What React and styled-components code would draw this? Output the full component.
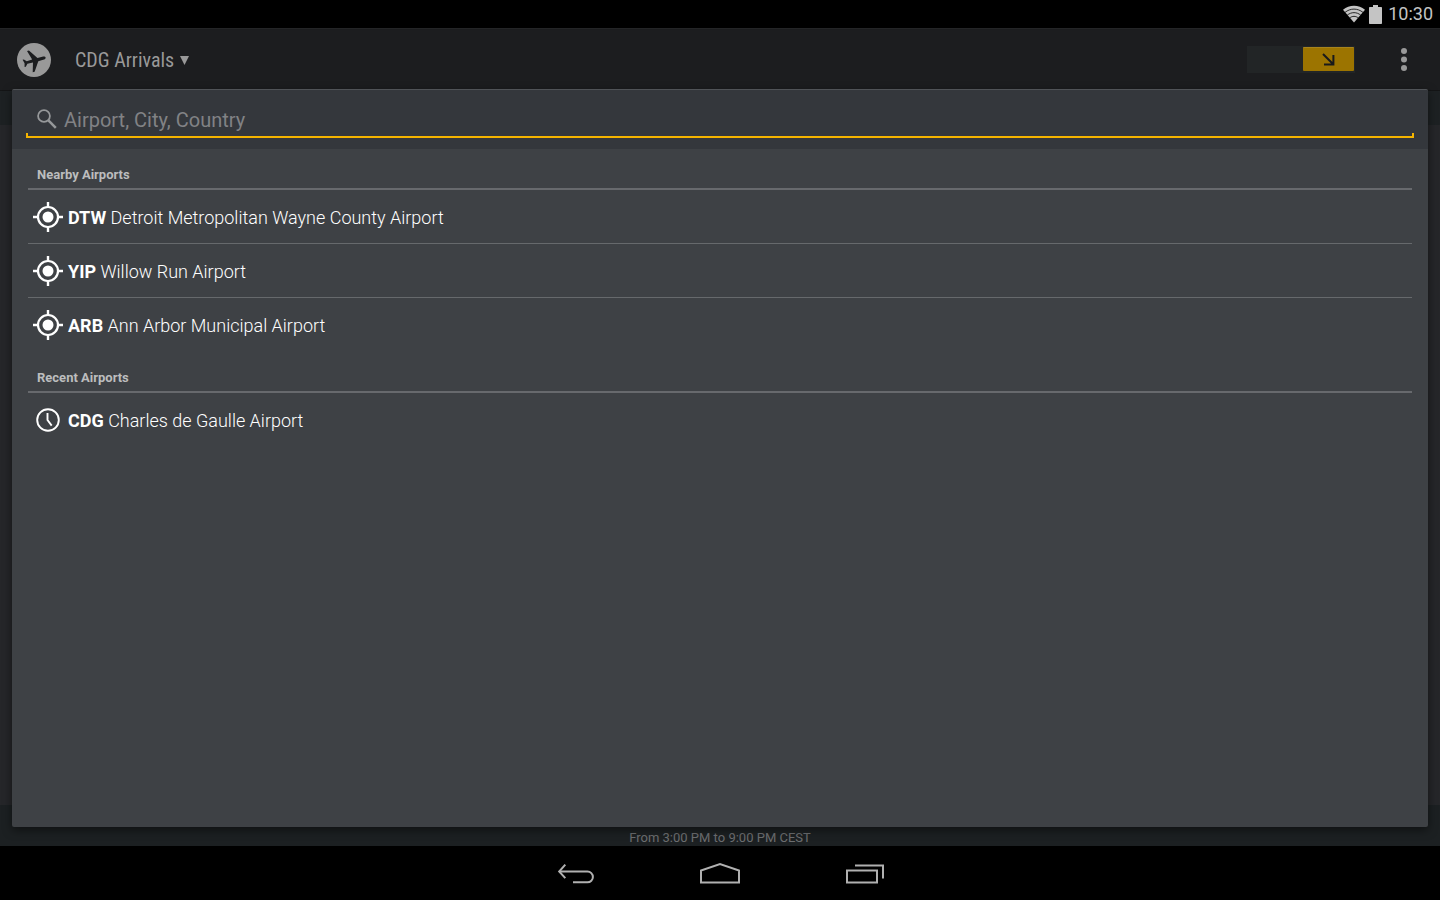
import React, { useState } from 'react';
import styled, { createGlobalStyle } from 'styled-components';

const GlobalStyle = createGlobalStyle`
  * {
    box-sizing: border-box;
  }

  body {
    margin: 0;
    background: #000;
    font-family: Roboto, 'Liberation Sans', sans-serif;
  }

  button {
    padding: 0;
    border: 0;
    background: none;
    color: inherit;
    font: inherit;
    cursor: pointer;
  }

  svg {
    display: block;
    flex: none;
  }
`;

const Screen = styled.div`
  display: flex;
  flex-direction: column;
  height: 100vh;
`;

const StatusBar = styled.div`
  display: flex;
  align-items: center;
  justify-content: flex-end;
  gap: 4px;
  height: 28px;
  padding-right: 7px;
  color: #c4c4c4;
`;

const Clock = styled.span`
  margin-left: 2px;
  font-size: 18px;
  line-height: 30px;
`;

const Main = styled.main`
  position: relative;
  flex: 1;
  display: flex;
  flex-direction: column;
  min-height: 0;
`;

const ActionBar = styled.header`
  display: flex;
  align-items: center;
  height: 63px;
  padding: 0 27px 0 17px;
  background: #1c1d1f;
  border-top: 1px solid #242527;
  border-bottom: 1px solid #141516;
`;

const BoardPicker = styled.button`
  display: flex;
  align-items: center;
  gap: 6px;
  margin: 0 auto 0 24px;
  color: #999;
  font-family: 'Roboto Condensed', Roboto, sans-serif;
  font-size: 20px;
  line-height: 28px;
`;

const DirectionSwitch = styled.button`
  display: flex;
  justify-content: ${({ $arrivals }) => ($arrivals ? 'flex-end' : 'flex-start')};
  width: 108px;
  height: 27px;
  padding: 1px;
  background: #222526;
`;

const Thumb = styled.span`
  display: flex;
  align-items: center;
  justify-content: center;
  width: 51px;
  height: 24px;
  border-top: 1px solid #a8841c;
  border-radius: 1px;
  background: #9c7400;
`;

const OverflowButton = styled.button`
  margin-left: 40px;
  padding: 4px 6px;
  color: #999;
`;

const ColumnStrip = styled.div`
  height: 34px;
  background: #1d2123;
`;

const Board = styled.div`
  flex: 1;
  background: #252629;
`;

const TimeRange = styled.footer`
  display: flex;
  align-items: flex-end;
  justify-content: center;
  height: 41px;
  background: #1c2022;
  color: #6c6e70;
  font-size: 13px;
  font-weight: 400;
  line-height: 16px;
`;

/* The search panel floats over the dimmed board */
const Panel = styled.section`
  position: absolute;
  top: 61px;
  right: 12px;
  bottom: 19px;
  left: 12px;
  overflow: hidden auto;
  border-top: 1px solid #505357;
  border-radius: 2px;
  background: #3e4145;
  box-shadow: 0 3px 10px rgba(0, 0, 0, 0.5);
`;

const SearchHeader = styled.div`
  height: 59px;
  padding: 12px 14px 0;
  background: #34373c;
`;

const SearchField = styled.label`
  position: relative;
  display: flex;
  align-items: center;
  gap: 7px;
  height: 36px;
  padding-left: 11px;
  border-bottom: 2px solid #f5b400;
  color: #96989a;

  &::before,
  &::after {
    content: '';
    position: absolute;
    bottom: 0;
    width: 2px;
    height: 3px;
    background: #f5b400;
  }

  &::before {
    left: 0;
  }

  &::after {
    right: 0;
  }
`;

const SearchInput = styled.input`
  flex: 1;
  min-width: 0;
  height: 34px;
  padding: 2px 0 0;
  border: 0;
  outline: 0;
  background: none;
  color: #fff;
  font: 400 20px Roboto, sans-serif;

  &::placeholder {
    color: #818285;
    opacity: 1;
  }
`;

const Group = styled.section`
  margin: 0 16px;
  padding-bottom: 1px;
`;

const GroupTitle = styled.h2`
  height: 41px;
  margin: 0;
  padding: 17px 9px 0;
  border-bottom: 2px solid #67696d;
  color: #bcbdbe;
  font-size: 13px;
  font-weight: 700;
  line-height: 18px;
`;

const AirportList = styled.ul`
  margin: 0;
  padding: 0;
  list-style: none;
`;

const AirportItem = styled.li`
  & + & {
    border-top: 1px solid #66696c;
  }
`;

const AirportButton = styled.button`
  display: flex;
  align-items: center;
  gap: 5px;
  width: 100%;
  height: 53px;
  padding-left: 5px;
  color: #fff;
  font-size: 18px;
  font-weight: 300;
  line-height: 24px;
  text-align: left;
`;

const AirportLabel = styled.span`
  padding-top: 2px;
`;

const Code = styled.strong`
  font-weight: 700;
`;

const NavBar = styled.nav`
  display: flex;
  align-items: center;
  justify-content: center;
  gap: 104px;
  height: 54px;
  padding-top: 2px;
  color: #b0b0b0;
`;

const WifiIcon = () => (
  <svg width="22" height="18" viewBox="0 0 22 18" aria-hidden="true">
    <path d="M0 4.8C6.2-.7 15.8-.7 22 4.8L11 17.4Z" fill="currentColor" />
    <path
      d="M2 7.4c5.4-4.4 12.6-4.4 18 0M4.2 10.2c4.1-3.4 9.5-3.4 13.6 0M6.6 13c2.7-2.2 6.1-2.2 8.8 0"
      fill="none"
      stroke="#000"
      strokeWidth="0.8"
    />
  </svg>
);

const BatteryIcon = () => (
  <svg width="13" height="19" viewBox="0 0 13 19" aria-hidden="true">
    <path d="M4 0h5v2h3.2q.8 0 .8.8v15.4q0 .8-.8.8H.8q-.8 0-.8-.8V2.8Q0 2 .8 2H4z" fill="currentColor" />
  </svg>
);

const PlaneLogo = () => (
  <svg width="34" height="34" viewBox="0 0 34 34" role="img" aria-label="Flights">
    <circle cx="17" cy="17" r="17" fill="#999" />
    <path
      transform="translate(17.5 17.5) rotate(75)"
      d="M0-11.5c1.1 0 1.6 1.4 1.6 3v5L11 2.8v2L1.6 2l-.4 5.7 2.6 2.3v1.3L0 10.3l-3.8 1V10l2.6-2.3L-1.6 2-11 4.8v-2l9.4-6.3v-5c0-1.6.5-3 1.6-3z"
      fill="#1c1d1f"
    />
  </svg>
);

const CaretIcon = () => (
  <svg width="9" height="10" viewBox="0 0 9 10" aria-hidden="true">
    <path d="M0 1h9L4.5 10z" fill="currentColor" />
  </svg>
);

const ArrowIcon = () => (
  <svg width="13" height="13" viewBox="0 0 13 13" aria-hidden="true">
    <path d="M1 1l10 10M11.4 2v9.6H2" fill="none" stroke="#191a1b" strokeWidth="2" />
  </svg>
);

const MoreIcon = () => (
  <svg width="6" height="24" viewBox="0 0 6 24" aria-hidden="true">
    <circle cx="3" cy="3" r="3" fill="currentColor" />
    <circle cx="3" cy="11.5" r="3" fill="currentColor" />
    <circle cx="3" cy="20" r="3" fill="currentColor" />
  </svg>
);

const SearchIcon = () => (
  <svg width="20" height="20" viewBox="0 0 20 20" aria-hidden="true">
    <circle cx="7" cy="7" r="5.9" fill="none" stroke="currentColor" strokeWidth="1.8" />
    <path d="M11.4 11.4l7.4 7.4" stroke="currentColor" strokeWidth="2.5" />
  </svg>
);

const NearbyIcon = () => (
  <svg width="30" height="30" viewBox="0 0 30 30" aria-hidden="true">
    <circle cx="15" cy="15" r="10" fill="none" stroke="currentColor" strokeWidth="2.2" />
    <circle cx="15" cy="15" r="5.5" fill="currentColor" />
    <path d="M15 0v5M15 25v5M0 15h5M25 15h5" stroke="currentColor" strokeWidth="2.4" />
  </svg>
);

const RecentIcon = () => (
  <svg width="30" height="30" viewBox="0 0 30 30" aria-hidden="true">
    <circle cx="15" cy="15" r="10.8" fill="none" stroke="currentColor" strokeWidth="1.9" />
    <path d="M14.5 8v7l4.2 5.6" fill="none" stroke="currentColor" strokeWidth="1.9" />
  </svg>
);

const BackIcon = () => (
  <svg width="40" height="24" viewBox="0 0 40 24" fill="none" stroke="currentColor" strokeWidth="2" aria-hidden="true">
    <path d="M4 9.5h28.5a5.4 5.4 0 0 1 0 10.8H18" />
    <path d="M10.3 2.6L4.2 9.5l6.1 6.6" />
  </svg>
);

const HomeIcon = () => (
  <svg width="42" height="24" viewBox="0 0 42 24" fill="none" stroke="currentColor" strokeWidth="2" aria-hidden="true">
    <path d="M2 20.5V8.5L21 2l19 6.5v12z" />
  </svg>
);

const RecentsIcon = () => (
  <svg width="40" height="24" viewBox="0 0 40 24" fill="none" stroke="currentColor" strokeWidth="2" aria-hidden="true">
    <path d="M2 8.5h30v12H2z" />
    <path d="M10 3.5h28v13" />
  </svg>
);

const groups = [
  {
    title: 'Nearby Airports',
    icon: <NearbyIcon />,
    airports: [
      { code: 'DTW', name: 'Detroit Metropolitan Wayne County Airport' },
      { code: 'YIP', name: 'Willow Run Airport' },
      { code: 'ARB', name: 'Ann Arbor Municipal Airport' },
    ],
  },
  {
    title: 'Recent Airports',
    icon: <RecentIcon />,
    airports: [{ code: 'CDG', name: 'Charles de Gaulle Airport' }],
  },
];

const App = () => {
  const [query, setQuery] = useState('');
  const [arrivals, setArrivals] = useState(true);

  return (
    <Screen>
      <GlobalStyle />
      <StatusBar>
        <WifiIcon />
        <BatteryIcon />
        <Clock>10:30</Clock>
      </StatusBar>

      <Main>
        <ActionBar>
          <PlaneLogo />
          <BoardPicker>
            CDG Arrivals
            <CaretIcon />
          </BoardPicker>
          <DirectionSwitch
            role="switch"
            aria-checked={arrivals}
            aria-label="Show arrivals"
            $arrivals={arrivals}
            onClick={() => setArrivals(!arrivals)}
          >
            <Thumb>
              <ArrowIcon />
            </Thumb>
          </DirectionSwitch>
          <OverflowButton aria-label="More options">
            <MoreIcon />
          </OverflowButton>
        </ActionBar>
        <ColumnStrip />
        <Board />
        <TimeRange>From 3:00 PM to 9:00 PM CEST</TimeRange>

        <Panel>
          <SearchHeader>
            <SearchField>
              <SearchIcon />
              <SearchInput
                type="text"
                aria-label="Search airports"
                placeholder="Airport, City, Country"
                value={query}
                onChange={(e) => setQuery(e.target.value)}
              />
            </SearchField>
          </SearchHeader>
          {groups.map((group) => (
            <Group key={group.title}>
              <GroupTitle>{group.title}</GroupTitle>
              <AirportList>
                {group.airports.map((airport) => (
                  <AirportItem key={airport.code}>
                    <AirportButton>
                      {group.icon}
                      <AirportLabel>
                        <Code>{airport.code}</Code> {airport.name}
                      </AirportLabel>
                    </AirportButton>
                  </AirportItem>
                ))}
              </AirportList>
            </Group>
          ))}
        </Panel>
      </Main>

      <NavBar>
        <button aria-label="Back">
          <BackIcon />
        </button>
        <button aria-label="Home">
          <HomeIcon />
        </button>
        <button aria-label="Recent apps">
          <RecentsIcon />
        </button>
      </NavBar>
    </Screen>
  );
};

export default App;
